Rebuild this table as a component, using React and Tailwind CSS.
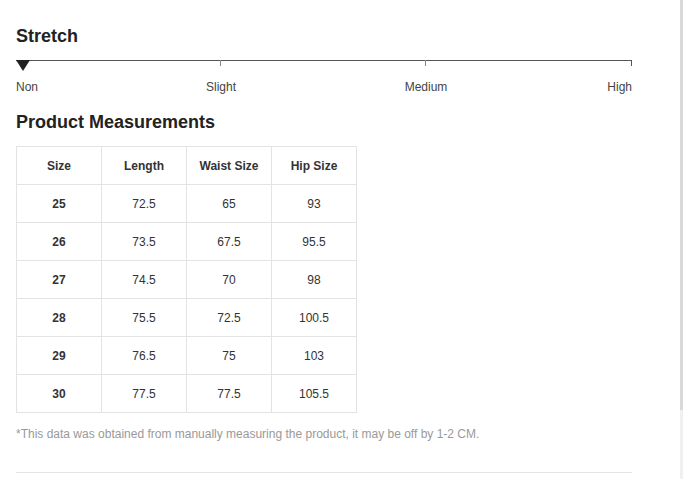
const rows = [
  ["25", "72.5", "65", "93"],
  ["26", "73.5", "67.5", "95.5"],
  ["27", "74.5", "70", "98"],
  ["28", "75.5", "72.5", "100.5"],
  ["29", "76.5", "75", "103"],
  ["30", "77.5", "77.5", "105.5"],
];

const headers = ["Size", "Length", "Waist Size", "Hip Size"];

function StretchScale() {
  return (
    <div className="w-[616px]">
      <div className="relative h-[12px]">
        <div className="absolute left-0 right-0 top-0 h-px bg-[#555]" />
        <div className="absolute left-[204px] top-0 h-[6px] w-px bg-[#888]" />
        <div className="absolute left-[409px] top-0 h-[6px] w-px bg-[#888]" />
        <div className="absolute right-0 top-0 h-[6px] w-px bg-[#555]" />
        <div className="absolute left-0 top-0 h-0 w-0 border-l-[7px] border-r-[7px] border-t-[11px] border-l-transparent border-r-transparent border-t-[#222]" />
      </div>
      <div className="relative mt-[8px] h-[14px] text-[12px] leading-[14px] text-[#444]">
        <span className="absolute left-0">Non</span>
        <span className="absolute left-[205px] -translate-x-1/2">Slight</span>
        <span className="absolute left-[410px] -translate-x-1/2">Medium</span>
        <span className="absolute right-0">High</span>
      </div>
    </div>
  );
}

export default function App() {
  return (
    <div className="flex h-[479px] w-full bg-white font-['Liberation_Sans',Arial,sans-serif] text-[#222]">
      <div className="flex-1 pl-4 pt-[26px]">
        <h2 className="text-[18px] font-bold leading-[20px]">Stretch</h2>
        <div className="mt-[14px]">
          <StretchScale />
        </div>
        <h2 className="mt-[18px] text-[18px] font-bold leading-[20px]">Product Measurements</h2>
        <table className="mt-[14px] border-collapse text-[12px] text-[#333]">
          <thead>
            <tr>
              {headers.map((h) => (
                <th key={h} className="h-[38px] w-[85px] border border-[#e3e3e3] text-center font-bold">
                  {h}
                </th>
              ))}
            </tr>
          </thead>
          <tbody>
            {rows.map((r) => (
              <tr key={r[0]}>
                {r.map((c, i) => (
                  <td
                    key={i}
                    className={`h-[38px] border border-[#e3e3e3] text-center ${i === 0 ? "font-bold" : ""}`}
                  >
                    {c}
                  </td>
                ))}
              </tr>
            ))}
          </tbody>
        </table>
        <p className="mt-[14px] text-[12px] leading-[14px] text-[#999]">
          *This data was obtained from manually measuring the product, it may be off by 1-2 CM.
        </p>
        <div className="mt-[31px] h-px w-[616px] bg-[#e3e3e3]" />
      </div>
      <div className="flex w-[3px] flex-col">
        <div className="h-[410px] bg-[#d9d9d9]" />
        <div className="flex-1 bg-[#f0f0f0]" />
      </div>
    </div>
  );
}
